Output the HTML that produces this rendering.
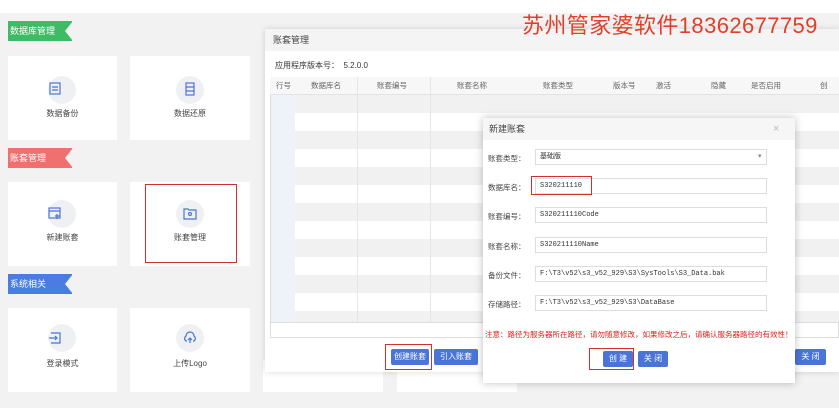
<!DOCTYPE html><html><head><meta charset="utf-8"><style>
*{margin:0;padding:0;box-sizing:border-box}
body{width:839px;height:408px;overflow:hidden;background:#fff;font-family:"Liberation Sans","Noto Sans CJK SC",sans-serif;font-size:8px;color:#555;position:relative}
.a{position:absolute}
.card{position:absolute;background:#fff}
.ic{position:absolute;width:28px;height:28px;border-radius:50%;background:#eef0f4}
.lbl{position:absolute;width:100%;text-align:center;font-size:8px;color:#444}
.rib{position:absolute;height:20px;color:#fff;font-size:9px;line-height:20px;padding-left:2px}
.rib:after{content:"";position:absolute;right:-1px;top:0;border-style:solid;border-width:10px 8px 10px 0;border-color:transparent #f2f2f2 transparent transparent}
.btn{position:absolute;background:#4a74d8;color:#fff;font-size:8px;text-align:center;border-radius:2px}
.rb{position:absolute;border:1.5px solid #d03030}
.fl{position:absolute;left:488px;font-size:7.5px;color:#444;white-space:nowrap}
.in{position:absolute;left:535px;width:232px;height:16px;border:1px solid #ddd;background:#fff;font-family:"Liberation Mono",monospace;font-size:7px;line-height:14px;padding-left:4px;color:#333}
</style></head><body>
<div class="a" style="left:0;top:13px;width:839px;height:395px;background:#f2f2f2"></div>
<div class="rib" style="left:8px;top:21px;width:64px;background:#3fbb65">数据库管理</div>
<div class="rib" style="left:8px;top:148px;width:64px;background:#f07070">账套管理</div>
<div class="rib" style="left:8px;top:274px;width:64px;background:#4a7de0">系统相关</div>
<div class="card" style="left:8px;top:56px;width:109px;height:84px"><div class="ic" style="left:40px;top:20px"></div><div class="lbl" style="top:52px">数据备份</div></div>
<div class="card" style="left:130px;top:56px;width:120px;height:84px"><div class="ic" style="left:46px;top:20px"></div><div class="lbl" style="top:52px">数据还原</div></div>
<div class="card" style="left:8px;top:182px;width:109px;height:84px"><div class="ic" style="left:40px;top:18px"></div><div class="lbl" style="top:50px">新建账套</div></div>
<div class="card" style="left:130px;top:182px;width:120px;height:84px"><div class="ic" style="left:46px;top:18px"></div><div class="lbl" style="top:50px">账套管理</div></div>
<div class="card" style="left:8px;top:308px;width:109px;height:84px"><div class="ic" style="left:40px;top:16px"></div><div class="lbl" style="top:50px">登录模式</div></div>
<div class="card" style="left:130px;top:308px;width:120px;height:84px"><div class="ic" style="left:46px;top:16px"></div><div class="lbl" style="top:50px">上传Logo</div></div>
<div class="card" style="left:263px;top:360px;width:120px;height:32px"></div>
<div class="card" style="left:397px;top:360px;width:120px;height:32px"></div>
<svg class="a" style="left:48px;top:82px" width="14" height="14" fill="none" stroke="#4a74d8" stroke-width="1.2"><rect x="2" y="1" width="10" height="11"/><path d="M4 5h6M4 8h6"/></svg>
<svg class="a" style="left:183px;top:82px" width="14" height="14" fill="none" stroke="#4a74d8" stroke-width="1.2"><rect x="3" y="1" width="8" height="12"/><path d="M3 5h8M3 9h8"/></svg>
<svg class="a" style="left:48px;top:206px" width="14" height="14" fill="none" stroke="#4a74d8" stroke-width="1.2"><rect x="1" y="2" width="11" height="10"/><path d="M1 5h11M9 8v5M7 10h5"/></svg>
<svg class="a" style="left:183px;top:206px" width="14" height="14" fill="none" stroke="#4a74d8" stroke-width="1.2"><path d="M1 3h4l1 1h7v9H1z"/><circle cx="7" cy="8" r="1.5"/></svg>
<svg class="a" style="left:48px;top:331px" width="14" height="14" fill="none" stroke="#4a74d8" stroke-width="1.2"><path d="M3 2h9v10H3M1 7h8M7 5l2 2-2 2"/></svg>
<svg class="a" style="left:183px;top:331px" width="14" height="14" fill="none" stroke="#4a74d8" stroke-width="1.2"><path d="M4 10H3a3 3 0 0 1 0-5 4 4 0 0 1 8 0 3 3 0 0 1 0 5h-1M7 12V7M5 9l2-2 2 2"/></svg>
<div class="rb" style="left:145px;top:184px;width:92px;height:79px"></div>
<div class="a" style="left:265px;top:29px;width:574px;height:343px;background:#fff;box-shadow:0 0 6px rgba(0,0,0,.15)"></div>
<div class="a" style="left:265px;top:29px;width:574px;height:22px;background:#f4f4f4;font-size:9px;line-height:22px;padding-left:8px;color:#444">账套管理</div>
<div class="a" style="left:275px;top:60px;font-size:8px;color:#333">应用程序版本号：&nbsp;&nbsp;5.2.0.0</div>
<div class="a" style="left:270px;top:77px;width:569px;height:261px;border:1px solid #ddd;background:#fff"></div>
<div class="a" style="left:270px;top:77px;width:569px;height:18px;background:#f7f7f7;border-bottom:1px solid #e3e3e3"></div>
<div class="a" style="left:271px;top:95px;width:24px;height:227px;background:#eef3f9"></div>
<div class="a" style="left:295px;top:95px;width:544px;height:227px;background:repeating-linear-gradient(#f1f1f1 0 18px,#fff 18px 36px)"></div>
<div class="a" style="left:357px;top:77px;width:1px;height:245px;background:#e6e6e6"></div>
<div class="a" style="left:430px;top:77px;width:1px;height:245px;background:#e6e6e6"></div>
<div class="a" style="left:270px;top:322px;width:569px;height:1px;background:#ddd"></div>
<div class="a" style="left:0;top:80px;width:839px;font-size:7.5px;color:#666">
<span class="a" style="left:276px">行号</span><span class="a" style="left:311px">数据库名</span><span class="a" style="left:377px">账套编号</span><span class="a" style="left:457px">账套名称</span><span class="a" style="left:543px">账套类型</span><span class="a" style="left:613px">版本号</span><span class="a" style="left:656px">激活</span><span class="a" style="left:711px">隐藏</span><span class="a" style="left:751px">是否启用</span><span class="a" style="left:820px">创</span></div>
<div class="btn" style="left:391px;top:349px;width:38px;height:16px;line-height:16px">创建账套</div>
<div class="btn" style="left:434px;top:349px;width:44px;height:16px;line-height:16px">引入账套</div>
<div class="btn" style="left:795px;top:349px;width:31px;height:16px;line-height:16px">关 闭</div>
<div class="rb" style="left:385px;top:344px;width:47px;height:26px"></div>
<div class="a" style="left:483px;top:118px;width:312px;height:265px;background:#fff;box-shadow:0 0 8px rgba(0,0,0,.25)"></div>
<div class="a" style="left:483px;top:118px;width:312px;height:22px;background:#f6f6f6;font-size:9px;line-height:22px;padding-left:6px;color:#444">新建账套<span class="a" style="left:290px;color:#bbb;font-size:11px">×</span></div>
<div class="fl" style="top:153px">账套类型：</div><div class="in" style="top:149px;font-family:'Liberation Sans','Noto Sans CJK SC',sans-serif">基础版<span class="a" style="left:222px;color:#888">▾</span></div>
<div class="fl" style="top:182px">数据库名：</div><div class="in" style="top:178px">S320211110</div>
<div class="fl" style="top:211px">账套编号：</div><div class="in" style="top:207px">S320211110Code</div>
<div class="fl" style="top:241px">账套名称：</div><div class="in" style="top:237px">S320211110Name</div>
<div class="fl" style="top:270px">备份文件：</div><div class="in" style="top:266px">F:\T3\v52\s3_v52_929\S3\SysTools\S3_Data.bak</div>
<div class="fl" style="top:299px">存储路径：</div><div class="in" style="top:295px">F:\T3\v52\s3_v52_929\S3\DataBase</div>
<div class="rb" style="left:531px;top:176px;width:61px;height:19px"></div>
<div class="a" style="left:485px;top:329px;font-size:7.5px;color:#e02020;white-space:nowrap">注意：路径为服务器所在路径，请勿随意修改，如果修改之后，请确认服务器路径的有效性！</div>
<div class="btn" style="left:603px;top:351px;width:30px;height:16px;line-height:16px">创 建</div>
<div class="btn" style="left:638px;top:351px;width:30px;height:16px;line-height:16px">关 闭</div>
<div class="rb" style="left:589px;top:348px;width:45px;height:22px"></div>
<div class="a" style="left:522px;top:8px;font-size:22px;color:#e0402a;white-space:nowrap;letter-spacing:0.4px">苏州管家婆软件18362677759</div>
</body></html>
